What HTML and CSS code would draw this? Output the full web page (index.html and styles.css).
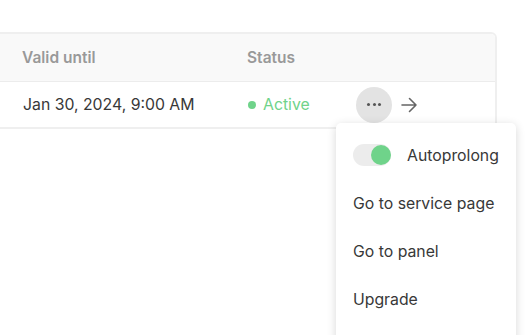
FILE: index.html
```html
<!DOCTYPE html>
<html lang="en">
<head>
    <meta charset="UTF-8">
    <title>Services</title>
    <link rel="stylesheet" href="styles.css">
</head>
<body>
    <div class="card">
        <div class="row head">
            <div class="cell date">Valid until</div>
            <div class="cell status">Status</div>
            <div class="cell actions"></div>
        </div>
        <div class="row">
            <div class="cell date">Jan 30, 2024, 9:00 AM</div>
            <div class="cell status active"><span class="dot"></span>Active</div>
            <div class="cell actions">
                <button class="more"><span></span><span></span><span></span></button>
                <svg class="arrow" width="18" height="18" viewBox="0 0 18 18">
                    <path d="M2 9h14M9.5 2.5L16 9l-6.5 6.5" fill="none" stroke="#666" stroke-width="1.6" stroke-linecap="round" stroke-linejoin="round"/>
                </svg>
            </div>
        </div>
    </div>

    <div class="menu">
        <div class="item">
            <span class="toggle on"><span class="knob"></span></span>
            Autoprolong
        </div>
        <div class="item">Go to service page</div>
        <div class="item">Go to panel</div>
        <div class="item">Upgrade</div>
    </div>
</body>
</html>
```

FILE: styles.css
```css
body {
    margin: 0;
    padding-top: 32px;
    font-family: Inter, "Noto Sans", sans-serif;
    font-size: 15.8px;
    color: #383838;
    background: #fff;
    overflow: hidden;
    height: 303px;
}
.card {
    margin-left: -20px;
    width: 513px;
    border: 2px solid #efefef;
    border-radius: 6px;
    overflow: hidden;
}
.row {
    display: flex;
    align-items: center;
    height: 45px;
}
.row.head {
    height: 47px;
    font-size: 15.5px;
    background-color: #f9f9f9;
    border-bottom: 1px solid #ececec;
    color: #999;
    font-weight: 600;
}
.cell.date {
    padding-left: 40px;
    width: 225px;
}
.row:not(.head) .cell.date {
    padding-left: 41px;
    width: 224px;
}
.cell.status {
    width: 109px;
    display: flex;
    align-items: center;
}
.active {
    color: #6fd38a;
}
.dot {
    width: 8px;
    height: 8px;
    border-radius: 50%;
    background-color: #6fd38a;
    margin: 0 7px 0 1px;
}
.cell.actions {
    display: flex;
    align-items: center;
    gap: 8px;
}
.more {
    width: 36px;
    height: 36px;
    border: none;
    border-radius: 50%;
    background-color: #e3e3e3;
    display: flex;
    align-items: center;
    justify-content: center;
    gap: 2.5px;
    padding: 0;
}
.more span {
    width: 3px;
    height: 3px;
    border-radius: 50%;
    background-color: #555;
}
.arrow {
    display: block;
}
.menu {
    position: absolute;
    left: 336px;
    top: 123px;
    width: 180px;
    height: 240px;
    background: #fff;
    border-radius: 5px;
    box-shadow: 0 2px 10px rgba(0, 0, 0, 0.16);
    padding-top: 8px;
}
.item {
    display: flex;
    align-items: center;
    height: 48px;
    padding-left: 17px;
}
.toggle {
    position: relative;
    width: 38px;
    height: 22px;
    border-radius: 11px;
    background-color: #ececec;
    margin-right: 16px;
}
.knob {
    position: absolute;
    top: 1px;
    right: 0;
    width: 20px;
    height: 20px;
    border-radius: 50%;
    background-color: #6fd38a;
}
```
